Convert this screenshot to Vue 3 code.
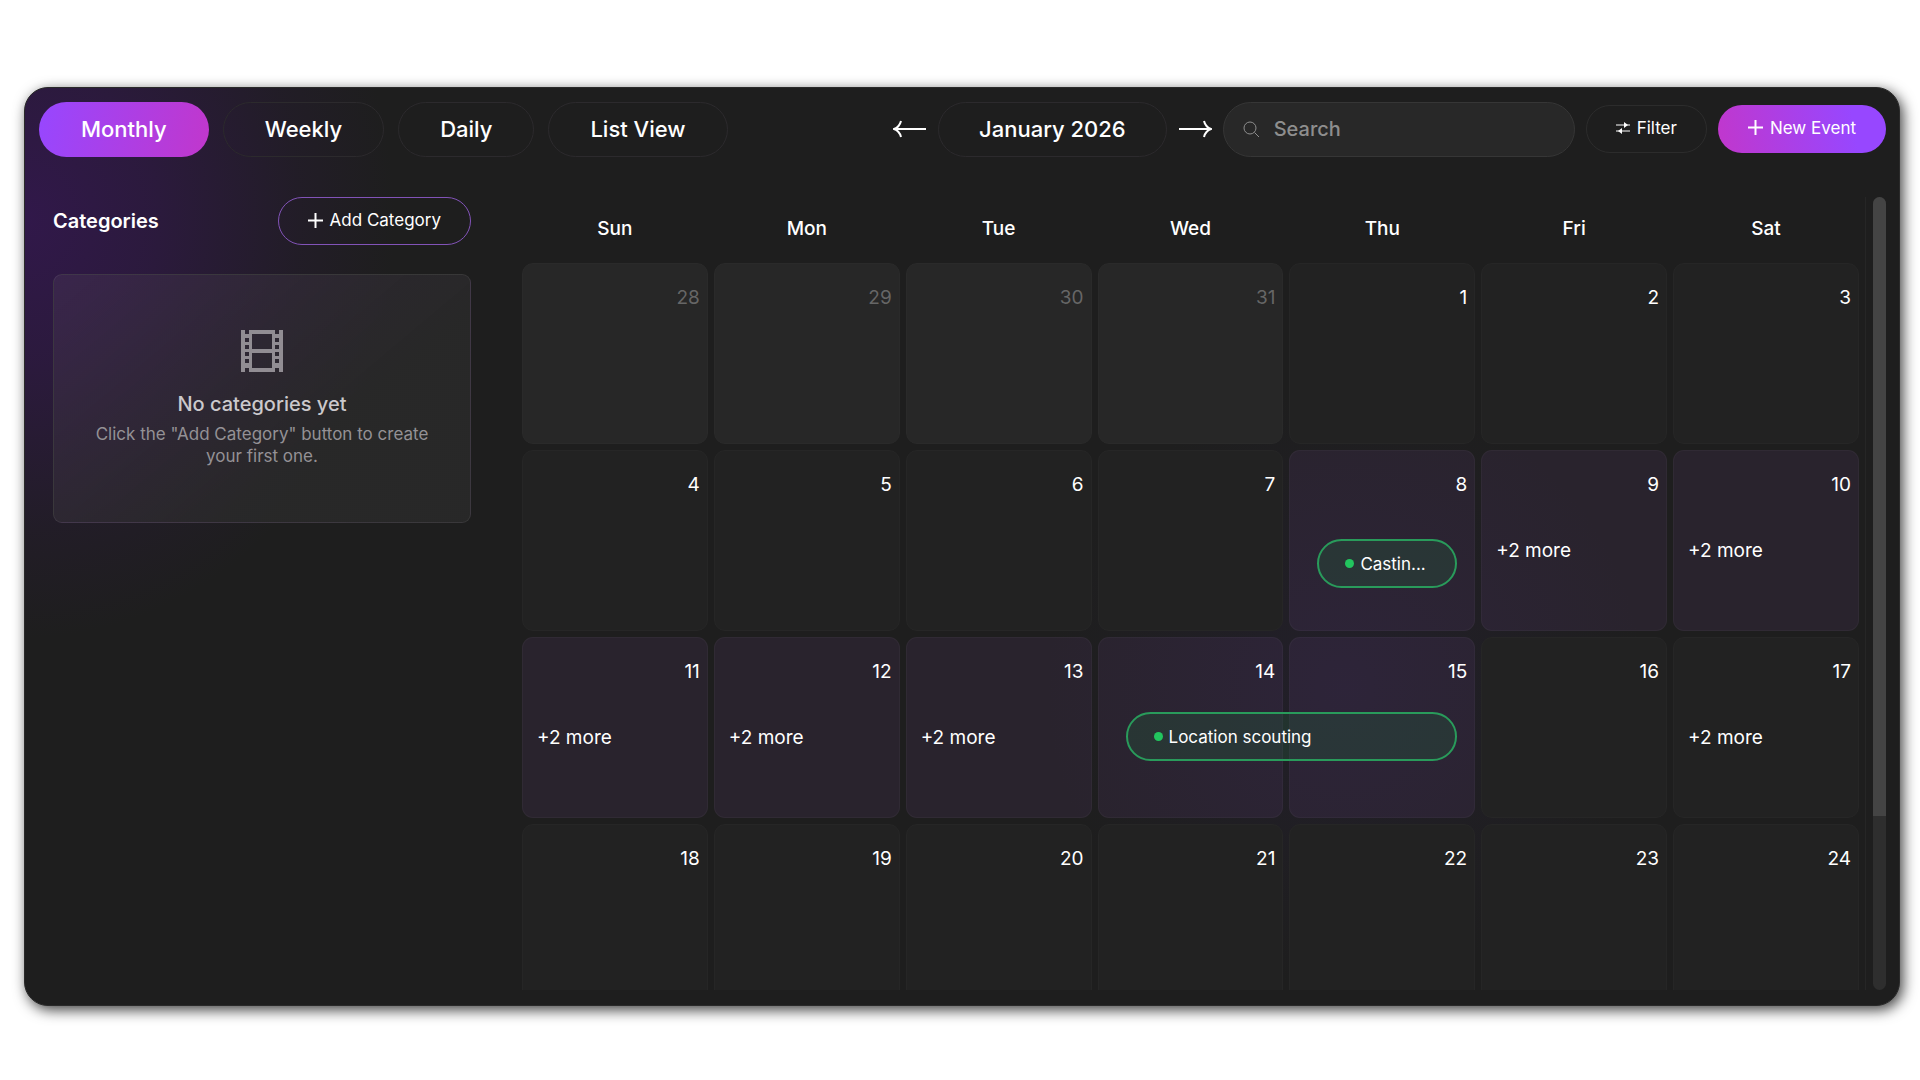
<script setup>
import { ref } from 'vue'

const views = ['Monthly', 'Weekly', 'Daily', 'List View']
const activeView = ref('Monthly')
const query = ref('')
const weekdays = ['Sun', 'Mon', 'Tue', 'Wed', 'Thu', 'Fri', 'Sat']

const busy = [8, 9, 10, 11, 12, 13, 14, 15]
const overflowing = [9, 10, 11, 12, 13, 17]
const events = {
  8: { title: 'Castin...', span: 1 },
  14: { title: 'Location scouting', span: 2 },
}

const weeks = Array.from({ length: 4 }, (_, w) =>
  Array.from({ length: 7 }, (_, d) => {
    const n = w * 7 + d - 3
    if (n < 1) return { label: n + 31, outside: true }
    return { label: n, busy: busy.includes(n), more: overflowing.includes(n) ? 2 : 0, event: events[n] }
  })
)
</script>

<template>
  <div class="page">
    <main class="panel">
      <header class="toolbar">
        <nav class="views">
          <button
            v-for="view in views"
            :key="view"
            type="button"
            class="pill"
            :class="{ active: view === activeView }"
            @click="activeView = view"
          >{{ view }}</button>
        </nav>
        <div class="month">
          <button type="button" class="arrow" aria-label="Previous month">
            <svg width="34" height="18" viewBox="0 0 34 18"><path d="M33 9H1M8 1C7 5 4 8 1 9c3 1 6 4 7 8" /></svg>
          </button>
          <button type="button" class="pill current">January 2026</button>
          <button type="button" class="arrow" aria-label="Next month">
            <svg width="34" height="18" viewBox="0 0 34 18"><path d="M1 9h32M26 1c1 4 4 7 7 8-3 1-6 4-7 8" /></svg>
          </button>
        </div>
        <label class="search">
          <svg width="18" height="18" viewBox="0 0 18 18"><circle cx="8" cy="8" r="6" /><path d="M12.500 12.500L17 17" /></svg>
          <input v-model="query" type="search" placeholder="Search" aria-label="Search" />
        </label>
        <button type="button" class="action filter">
          <svg width="14" height="12" viewBox="0 0 14 12"><path d="M0 3h14M0 9h14" /><path class="knob" d="M8 0l4 3-4 3zM6 6L2 9l4 3z" /></svg>
          Filter
        </button>
        <button type="button" class="action create">
          <svg class="plus" width="15" height="15" viewBox="0 0 15 15"><path d="M7.500 0v15M0 7.500h15" /></svg>
          New Event
        </button>
      </header>

      <div class="content">
        <aside class="sidebar">
          <div class="side-head">
            <h2>Categories</h2>
            <button type="button" class="action add">
              <svg class="plus" width="15" height="15" viewBox="0 0 15 15"><path d="M7.500 0v15M0 7.500h15" /></svg>
              Add Category
            </button>
          </div>
          <section class="empty">
            <svg class="film" width="42" height="42" viewBox="0 0 42 42">
              <path
                fill-rule="evenodd"
                d="M0 0h4v4h4V0h26v4h4V0h4v42h-4v-4h-4v4H8v-4H4v4H0zM4 8v4h4V8zM4 15v4h4v-4zM4 22v4h4v-4zM4 29v4h4v-4zM34 8v4h4V8zM34 15v4h4v-4zM34 22v4h4v-4zM34 29v4h4v-4zM11 4v15h20V4zM11 23v15h20V23z"
              />
            </svg>
            <h3>No categories yet</h3>
            <p>Click the "Add Category" button to create your first one.</p>
          </section>
        </aside>

        <div class="scroller">
          <table class="calendar">
            <thead>
              <tr>
                <th v-for="day in weekdays" :key="day" scope="col">{{ day }}</th>
              </tr>
            </thead>
            <tbody>
              <tr v-for="(week, w) in weeks" :key="w">
                <td v-for="cell in week" :key="cell.label" :class="{ outside: cell.outside, busy: cell.busy }">
                  <div class="date">{{ cell.label }}</div>
                  <a v-if="cell.more" href="#" class="more">+{{ cell.more }} more</a>
                  <button v-if="cell.event" type="button" class="event" :class="{ wide: cell.event.span === 2 }">
                    <span class="dot"></span>
                    <span class="title">{{ cell.event.title }}</span>
                  </button>
                </td>
              </tr>
            </tbody>
          </table>
        </div>
        <div class="track"><div class="thumb"></div></div>
      </div>
    </main>
  </div>
</template>

<style>
body {
  background: #fff;
}
</style>

<style scoped>
* {
  box-sizing: border-box;
}

.page {
  height: 100vh;
  min-height: 600px;
  padding: 87px 20px 74px 24px;
  font-family: Inter, "Noto Sans", sans-serif;
  color: #fff;
}

.panel {
  display: flex;
  flex-direction: column;
  height: 100%;
  padding: 14px 13px 15px 14px;
  border: 1px solid #2a2a2a;
  border-radius: 24px;
  overflow: hidden;
  background:
    radial-gradient(ellipse 370px 420px at 0 130px, #31184a, rgba(49, 24, 74, 0.7) 35%, rgba(49, 24, 74, 0.2) 75%, transparent),
    radial-gradient(circle 300px at 1320px 600px, rgba(50, 35, 85, 0.22), transparent),
    #1e1e1e;
  box-shadow: 3px 4px 14px rgba(0, 0, 0, 0.75);
}

button {
  font-family: inherit;
  color: inherit;
  cursor: pointer;
}

svg {
  flex: none;
  fill: none;
  stroke: currentColor;
}

.toolbar {
  display: flex;
  align-items: center;
}

.views {
  display: flex;
  gap: 14px;
}

.pill {
  height: 55px;
  padding: 0 41px 2px;
  border: 1px solid #2c2a2d;
  border-radius: 28px;
  background: transparent;
  font-size: 22px;
  font-weight: 500;
  white-space: nowrap;
}

.pill.active {
  border-color: transparent;
  background: linear-gradient(100deg, #9747ff, #c137cc) border-box;
}

.month {
  display: flex;
  align-items: center;
  gap: 11px;
  margin-left: auto;
}

.month .pill {
  padding: 0 40px 2px;
}

.arrow {
  display: flex;
  padding: 0 0 2px;
  border: 0;
  background: none;
}

.arrow svg {
  stroke-width: 2;
}

.search {
  display: flex;
  align-items: center;
  gap: 14px;
  width: 352px;
  height: 55px;
  margin-left: 11px;
  padding: 0 18px 2px;
  border: 1px solid #363636;
  border-radius: 28px;
  background: #282828;
  color: #8e8e8e;
}

.search input {
  min-width: 0;
  flex: 1;
  padding: 0;
  border: 0;
  outline: 0;
  background: none;
  font-family: inherit;
  font-size: 20px;
  font-weight: 500;
  color: #fff;
}

.search input::placeholder {
  color: #8e8e8e;
  opacity: 1;
}

.action {
  display: flex;
  align-items: center;
  justify-content: center;
  gap: 7px;
  height: 48px;
  padding: 0 29px 2px;
  border: 1px solid transparent;
  border-radius: 24px;
  background: transparent;
  font-size: 17px;
  font-weight: 400;
  white-space: nowrap;
}

.toolbar .action {
  margin: 0 0 2px 11px;
}

.plus {
  stroke-width: 2;
}

.filter {
  border-color: #2c2c2c;
}

.filter .knob {
  fill: currentColor;
  stroke: none;
}

.create {
  background: linear-gradient(80deg, #c137cc, #9747ff 80%) border-box;
}

.content {
  display: flex;
  flex: 1;
  min-height: 0;
  margin-top: 40px;
}

.sidebar {
  width: 418px;
  flex: none;
  margin-left: 14px;
}

.side-head {
  display: flex;
  align-items: center;
  justify-content: space-between;
}

.side-head h2 {
  margin: 0;
  font-size: 20px;
  font-weight: 600;
}

.add {
  border-color: #8253b8;
}

.empty {
  display: flex;
  flex-direction: column;
  align-items: center;
  height: 249px;
  margin-top: 29px;
  padding: 55px 40px 0;
  border: 1px solid rgba(255, 255, 255, 0.08);
  border-radius: 9px;
  background: linear-gradient(140deg, rgba(70, 50, 85, 0.5), rgba(44, 44, 44, 0.72) 65%);
  text-align: center;
}

.film {
  fill: #918d93;
  stroke: none;
}

.empty h3 {
  margin: 19px 0 0;
  font-size: 20px;
  font-weight: 500;
  line-height: 26px;
  color: #cbc9cc;
}

.empty p {
  margin: 6px 0 0;
  font-size: 17px;
  line-height: 22px;
  color: #949195;
}

.scroller {
  flex: 1;
  min-width: 0;
  margin-left: 45px;
  overflow: hidden;
}

.track {
  width: 13px;
  flex: none;
  margin-left: 7px;
  border-radius: 7px;
  background: #2e2e2e;
}

.thumb {
  height: 78%;
  border-radius: 7px 7px 0 0;
  background: #444;
}

.calendar {
  width: 100%;
  table-layout: fixed;
  border-collapse: separate;
  border-spacing: 6px;
  border-right: 1px solid #262626;
}

.calendar th {
  height: 54px;
  padding: 0 0 4px;
  font-size: 19px;
  font-weight: 500;
}

.calendar td {
  position: relative;
  height: 181px;
  padding: 21px 7px 0 14px;
  border: 1px solid #262626;
  border-radius: 11px;
  background: #222;
  vertical-align: top;
}

.calendar td.outside {
  border-color: #2a2a2a;
  background: #272727;
}

.calendar td.busy {
  border-color: rgba(255, 255, 255, 0.03);
  background: rgba(200, 120, 255, 0.07);
}

.date {
  font-size: 19px;
  line-height: 26px;
  text-align: right;
}

.outside .date {
  color: #666;
}

.more {
  display: block;
  margin-top: 40px;
  font-size: 19px;
  line-height: 26px;
  color: inherit;
  text-decoration: none;
}

.event {
  position: absolute;
  z-index: 1;
  top: 88px;
  left: 27px;
  display: flex;
  align-items: center;
  gap: 6px;
  width: calc(100% - 44px);
  height: 49px;
  padding: 0 26px;
  border: 2px solid #299b5b;
  border-radius: 25px;
  background: rgba(36, 90, 60, 0.35);
  font-size: 17px;
}

.event.wide {
  top: 74px;
  width: calc(200% - 36px);
}

.dot {
  flex: none;
  width: 9px;
  height: 9px;
  border-radius: 50%;
  background: #22c55e;
}

.title {
  white-space: nowrap;
}
</style>
